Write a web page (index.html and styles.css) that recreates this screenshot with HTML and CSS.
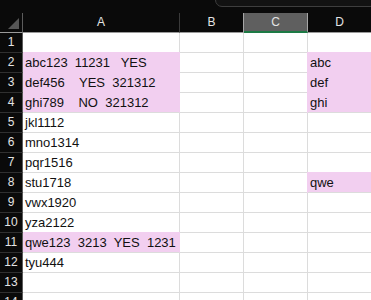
FILE: index.html
```html
<!DOCTYPE html>
<html lang="en">
<head>
  <meta charset="UTF-8">
  <title>Sheet</title>
  <link rel="stylesheet" href="styles.css">
</head>
<body>
  <div class="topbar">
    <div class="formula-box"></div>
  </div>

  <div class="sheet">
    <!-- column headers -->
    <div class="corner">
      <svg width="22" height="19" viewBox="0 0 22 19"><polygon points="19,5 19,16 8,16" fill="#565656"/></svg>
    </div>
    <div class="ch">A</div>
    <div class="ch">B</div>
    <div class="ch ch--active">C</div>
    <div class="ch">D</div>

    <div class="rh">1</div><div class="cell"></div><div class="cell"></div><div class="cell"></div><div class="cell"></div>
    <div class="rh">2</div><div class="cell fill">abc123  11231   YES</div><div class="cell"></div><div class="cell"></div><div class="cell fill fill--left">abc</div>
    <div class="rh">3</div><div class="cell fill">def456    YES  321312</div><div class="cell"></div><div class="cell"></div><div class="cell fill fill--left">def</div>
    <div class="rh">4</div><div class="cell fill">ghi789    NO  321312</div><div class="cell"></div><div class="cell"></div><div class="cell fill fill--left">ghi</div>
    <div class="rh">5</div><div class="cell">jkl1112</div><div class="cell"></div><div class="cell"></div><div class="cell"></div>
    <div class="rh">6</div><div class="cell">mno1314</div><div class="cell"></div><div class="cell"></div><div class="cell"></div>
    <div class="rh">7</div><div class="cell">pqr1516</div><div class="cell"></div><div class="cell"></div><div class="cell"></div>
    <div class="rh">8</div><div class="cell">stu1718</div><div class="cell"></div><div class="cell"></div><div class="cell fill fill--left">qwe</div>
    <div class="rh">9</div><div class="cell">vwx1920</div><div class="cell"></div><div class="cell"></div><div class="cell"></div>
    <div class="rh">10</div><div class="cell">yza2122</div><div class="cell"></div><div class="cell"></div><div class="cell"></div>
    <div class="rh">11</div><div class="cell fill">qwe123  3213  YES  1231</div><div class="cell"></div><div class="cell"></div><div class="cell"></div>
    <div class="rh">12</div><div class="cell">tyu444</div><div class="cell"></div><div class="cell"></div><div class="cell"></div>
    <div class="rh">13</div><div class="cell"></div><div class="cell"></div><div class="cell"></div><div class="cell"></div>
    <div class="rh">14</div><div class="cell"></div><div class="cell"></div><div class="cell"></div><div class="cell"></div>
  </div>
</body>
</html>
```

FILE: styles.css
```css
body {
  margin: 0;
  background-color: #0a0a0a;
  font-family: "Liberation Sans", Arial, sans-serif;
  overflow: hidden;
}

.topbar {
  height: 13px;
  display: flex;
  justify-content: flex-end;
  overflow: hidden;
}

.formula-box {
  width: 160px;
  height: 11px;
  margin-top: -6px;
  margin-right: -6px;
  border: 1px solid #3e3e3e;
  border-radius: 0 0 7px 7px;
  background-color: #121212;
}

.sheet {
  display: grid;
  grid-template-columns: 23px 157px 64px 64px 64px;
  grid-auto-rows: 20px;
  background-color: #ffffff;
}

.corner {
  background-color: #0a0a0a;
  border-right: 1px solid #5c5c5c;
  border-bottom: 1px solid #9a9a9a;
  box-sizing: border-box;
}

.corner svg {
  display: block;
}

/* column letters */
.ch {
  background-color: #0a0a0a;
  color: #e4e4e4;
  font-size: 12px;
  line-height: 19px;
  text-align: center;
  border-right: 1px solid #3a3a3a;
  border-bottom: 1px solid #9a9a9a;
  box-sizing: border-box;
}

.ch--active {
  background-color: #5f5f5f;
  border-right-color: #a6a6a6;
  border-bottom: 2px solid #1d7a45;
  box-shadow: -1px 0 0 #a6a6a6;
  line-height: 18px;
}

/* row numbers */
.rh {
  background-color: #0a0a0a;
  color: #e4e4e4;
  font-size: 12px;
  line-height: 19px;
  text-align: center;
  border-right: 1px solid #5c5c5c;
  border-bottom: 1px solid #303030;
  box-sizing: border-box;
}

.cell {
  border-right: 1px solid #dcdcdc;
  border-bottom: 1px solid #dcdcdc;
  box-sizing: border-box;
  padding-left: 2px;
  font-size: 13px;
  line-height: 19px;
  color: #111111;
  white-space: pre;
  overflow: hidden;
}

.fill {
  background-color: #f2cff0;
  border-right-color: #f2cff0;
  box-shadow: 0 -1px 0 #f2cff0;
}

.fill--left {
  box-shadow: 0 -1px 0 #f2cff0, -1px 0 0 #f2cff0, -1px -1px 0 #f2cff0;
}
```
